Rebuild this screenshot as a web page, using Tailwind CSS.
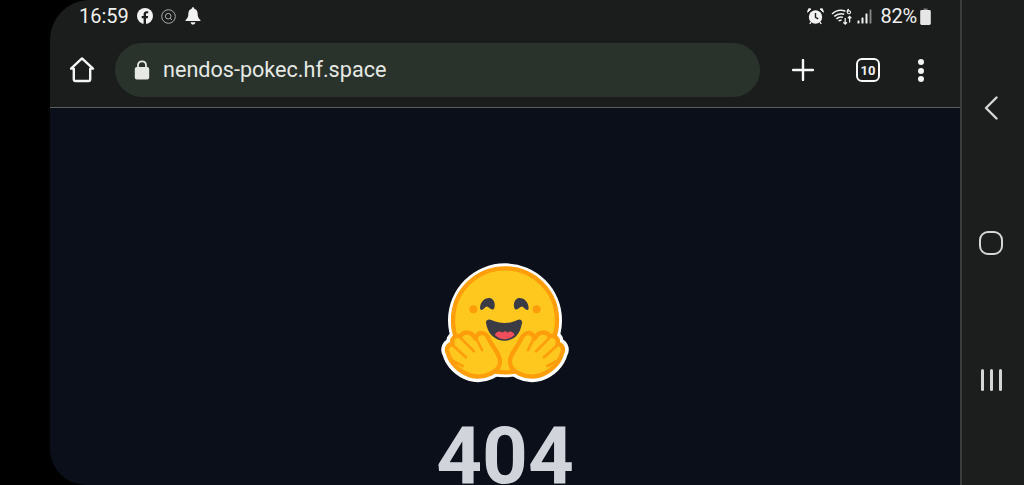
<!DOCTYPE html>
<html lang="en">

<head>
    <meta charset="UTF-8">
    <meta name="viewport" content="width=device-width, initial-scale=1.0">
    <title>404</title>
    <script src="https://cdn.jsdelivr.net/npm/@tailwindcss/browser@4"></script>
</head>

<body class="bg-black h-screen overflow-hidden font-['Roboto',sans-serif]">
    <div class="flex h-[485px] bg-black">
        <!-- Left cutout -->
        <div class="w-[50px] shrink-0 bg-black"></div>

        <!-- Browser -->
        <div class="w-[910px] shrink-0 flex flex-col overflow-hidden rounded-tl-[40px] rounded-bl-[36px] bg-[#0b0f19]">
            <div class="bg-[#1b1d1c] h-[108px] shrink-0 border-b border-[#5c5f5f]">
                <!-- Status bar -->
                <div class="h-[32px] flex items-center justify-between pl-[29px] pr-[29px] text-[#f0f0f0]">
                    <div class="flex items-center">
                        <span class="text-[20px] leading-none">16:59</span>
                        <svg class="ml-[8px] w-[16px] h-[16px]" viewBox="0 0 16 16">
                            <circle cx="8" cy="8" r="8" fill="#f2f2f2" />
                            <path d="M6.6 16V10.3H4.7V8H6.6V6.3C6.6 4.3 7.8 3.2 9.6 3.2C10.4 3.2 11.2 3.3 11.2 3.3V5.3H10.2C9.3 5.3 9 5.9 9 6.4V8H11.1L10.8 10.3H9V16Z" fill="#1b1d1c" />
                        </svg>
                        <svg class="ml-[8px] w-[15px] h-[15px]" viewBox="0 0 15 15" fill="none" stroke="#a9abaa">
                            <circle cx="7.5" cy="7.5" r="6.8" />
                            <circle cx="7.2" cy="7.2" r="2.8" />
                            <path d="M9.2 9.2L11 11" />
                        </svg>
                        <svg class="ml-[9px] w-[16px] h-[18px]" viewBox="0 0 15 17" fill="#f2f2f2">
                            <path d="M7.5 0.3C8.3 0.3 8.7 0.9 8.7 1.6C10.9 2.2 11.9 4 11.9 6.4C11.9 9.3 12.6 10.6 14.5 12.3V13.3H0.5V12.3C2.4 10.6 3.1 9.3 3.1 6.4C3.1 4 4.1 2.2 6.3 1.6C6.3 0.9 6.7 0.3 7.5 0.3Z" />
                            <path d="M5.2 14.4H9.8C9.5 15.8 8.6 16.6 7.5 16.6C6.4 16.6 5.5 15.8 5.2 14.4Z" />
                        </svg>
                    </div>
                    <div class="flex items-center">
                        <svg class="w-[17px] h-[17px]" viewBox="0 0 17 17">
                            <circle cx="8.5" cy="9" r="6.7" fill="#f2f2f2" />
                            <path d="M8.5 5V9.3L11.2 10.8" fill="none" stroke="#1b1d1c" stroke-width="1.4" />
                            <path d="M0.6 4.2L4 1L1.6 0.8ZM16.4 4.2L13 1L15.4 0.8Z" fill="#f2f2f2" stroke="#f2f2f2" />
                            <path d="M4 14L2.8 16M13 14L14.2 16" stroke="#f2f2f2" stroke-width="1.4" />
                        </svg>
                        <svg class="ml-[7px] w-[22px] h-[17px]" viewBox="0 0 22 17" fill="none" stroke="#f0f0f0" stroke-width="1.5">
                            <path d="M1 6C5 2.4 10 1.6 14.4 3.2" />
                            <path d="M3.2 8.4C6.4 5.8 10 5.2 13.2 6.2" />
                            <path d="M5.4 10.8C7.6 9 10 8.7 12 9.4" />
                            <path d="M7.6 13C8.6 12.2 9.6 12 10.6 12.2" />
                            <path d="M18 1.4C16.6 1.4 16.2 2.4 16.2 3.6C16.2 5 16.8 5.8 18 5.8C19.2 5.8 19.6 5 19.6 4.2C19.6 3.4 19 2.9 18 2.9C17 2.9 16.4 3.4 16.3 4" stroke-width="1.1" />
                            <path d="M14.2 10V16M12.4 14.2L14.2 16L16 14.2M18.6 14.6V8.4M16.9 10.2L18.6 8.4L20.3 10.2" stroke-width="1.3" />
                        </svg>
                        <svg class="ml-[4px] w-[15px] h-[15px]" viewBox="0 0 15 15" fill="#f0f0f0">
                            <rect x="0.5" y="11.5" width="2" height="3" rx="0.5" />
                            <rect x="4.5" y="8.5" width="2" height="6" rx="0.5" />
                            <rect x="8.5" y="4.5" width="2" height="10" rx="0.5" />
                            <rect x="12.6" y="0.5" width="1.8" height="14" fill="#8a8c8b" />
                        </svg>
                        <span class="ml-[8px] text-[20px] leading-none tracking-[-0.2px]">82%</span>
                        <svg class="ml-[3px] w-[11px] h-[17px]" viewBox="0 0 11 17">
                            <path d="M3.5 0.5H7.5V2H3.5Z" fill="#7d7f7e" />
                            <rect x="0.2" y="2" width="10.6" height="15" rx="1.4" fill="#e6e6e6" />
                        </svg>
                    </div>
                </div>

                <!-- Toolbar -->
                <div class="h-[75px] flex items-start">
                    <svg class="ml-[19px] mt-[24px] w-[26px] h-[28px]" viewBox="0 0 26 28" fill="none" stroke="#f5f5f5" stroke-width="2.4" stroke-linejoin="round" stroke-linecap="round">
                        <path d="M2 12.6L13 2.4L24 12.6H21.2V23.2C21.2 24.4 20.6 25 19.4 25H6.6C5.4 25 4.8 24.4 4.8 23.2V12.6Z" />
                    </svg>
                    <div class="ml-[20px] mt-[11px] w-[645px] h-[54px] rounded-full bg-[#29332c] flex items-center">
                        <svg class="ml-[19px] w-[16px] h-[20px]" viewBox="0 0 16 20">
                            <path d="M4 8V5.2C4 3 5.6 1.4 8 1.4C10.4 1.4 12 3 12 5.2V8" fill="none" stroke="#e6e8e4" stroke-width="1.8" />
                            <rect x="0.8" y="7" width="14.4" height="12.6" rx="2" fill="#e6e8e4" />
                        </svg>
                        <span class="ml-[13px] text-[21.6px] leading-none text-[#e6e8e4]">nendos-pokec.hf.space</span>
                    </div>
                    <svg class="ml-[32px] mt-[27px] w-[22px] h-[22px]" viewBox="0 0 22 22" stroke="#f8f8f8" stroke-width="2.4" stroke-linecap="round">
                        <path d="M11 1V21M1 11H21" />
                    </svg>
                    <div class="ml-[42px] mt-[26px] w-[24px] h-[24px] rounded-[6px] border-[2.5px] border-[#f8f8f8] flex items-center justify-center text-[13px] font-bold leading-none text-[#f0f0f0]">10</div>
                    <div class="ml-[38px] mt-[27px] flex flex-col gap-[2.5px]">
                        <div class="w-[6px] h-[6px] rounded-full bg-[#f4f4f4]"></div>
                        <div class="w-[6px] h-[6px] rounded-full bg-[#f4f4f4]"></div>
                        <div class="w-[6px] h-[6px] rounded-full bg-[#f4f4f4]"></div>
                    </div>
                </div>
            </div>

            <!-- Page -->
            <div class="flex-1 flex flex-col items-center overflow-hidden">
                <svg class="mt-[142px] w-[170px] h-[145px] shrink-0" viewBox="0 0 510 435">
                    <defs>
                        <g id="hand">
                            <path d="M240 330C238 312 222 296 208 270C200 246 178 244 170 258L166 266C156 244 132 242 122 258C104 254 92 268 98 282C84 282 76 296 84 310C92 340 118 366 150 376C190 388 244 366 240 330Z" />
                        </g>
                        <g id="hand-lines">
                            <path d="M120 262L162 304M98 286L138 322M98 332L128 348M168 264L186 300" fill="none" stroke="#ff9d0b" stroke-width="8" stroke-linecap="round" />
                        </g>
                    </defs>
                    <!-- white outline -->
                    <circle cx="255" cy="211" r="171" fill="#ffffff" />
                    <use href="#hand" fill="#ffffff" stroke="#ffffff" stroke-width="34" stroke-linejoin="round" />
                    <use href="#hand" transform="translate(510,0) scale(-1,1)" fill="#ffffff" stroke="#ffffff" stroke-width="34" stroke-linejoin="round" />
                    <!-- face -->
                    <circle cx="255" cy="211" r="156" fill="#ffc81e" stroke="#ff9d0b" stroke-width="13" />
                    <path d="M180 176C180 150 200 142 210 144C222 146 228 164 222 176C216 184 210 172 202 170C194 168 188 188 180 176Z" fill="#3a3b45" />
                    <path d="M326 176C326 150 306 142 296 144C284 146 278 164 284 176C290 184 296 172 304 170C312 168 318 188 326 176Z" fill="#3a3b45" />
                    <circle cx="160" cy="178" r="12" fill="#ff9d0b" />
                    <circle cx="350" cy="178" r="12" fill="#ff9d0b" />
                    <path d="M198 218C198 210 206 206 214 210C240 222 270 222 292 210C300 206 308 210 306 220C300 254 282 272 254 272C224 272 202 250 198 218Z" fill="#3a3b45" />
                    <path d="M224 254C228 246 238 240 248 248C252 242 258 242 262 248C270 240 280 246 284 254C266 272 242 272 224 254Z" fill="#ef4e5a" />
                    <!-- hands -->
                    <use href="#hand" fill="#ffc81e" stroke="#ff9d0b" stroke-width="13" stroke-linejoin="round" />
                    <use href="#hand-lines" />
                    <g transform="translate(510,0) scale(-1,1)">
                        <use href="#hand" fill="#ffc81e" stroke="#ff9d0b" stroke-width="13" stroke-linejoin="round" />
                        <use href="#hand-lines" />
                    </g>
                </svg>
                <h1 class="mt-[21px] text-[80px] leading-none font-bold text-[#d1d5db] shrink-0">404</h1>
            </div>
        </div>

        <!-- Nav bar -->
        <div class="w-[64px] shrink-0 flex flex-col items-center pr-[4px] bg-[#1c1e1d] border-l-2 border-[#3a3d3d]">
            <svg class="mt-[96px] w-[14px] h-[24px]" viewBox="0 0 14 24" fill="none" stroke="#d6d6d6" stroke-width="2.4" stroke-linecap="round" stroke-linejoin="round">
                <path d="M12.5 1.5L2 12L12.5 22.5" />
            </svg>
            <div class="mt-[111px] w-[24px] h-[24px] rounded-[9px] border-[2.5px] border-[#d6d6d6]"></div>
            <div class="mt-[114px] flex gap-[6px]">
                <div class="w-[3px] h-[22px] rounded-full bg-[#d6d6d6]"></div>
                <div class="w-[3px] h-[22px] rounded-full bg-[#d6d6d6]"></div>
                <div class="w-[3px] h-[22px] rounded-full bg-[#d6d6d6]"></div>
            </div>
        </div>
    </div>
</body>

</html>
